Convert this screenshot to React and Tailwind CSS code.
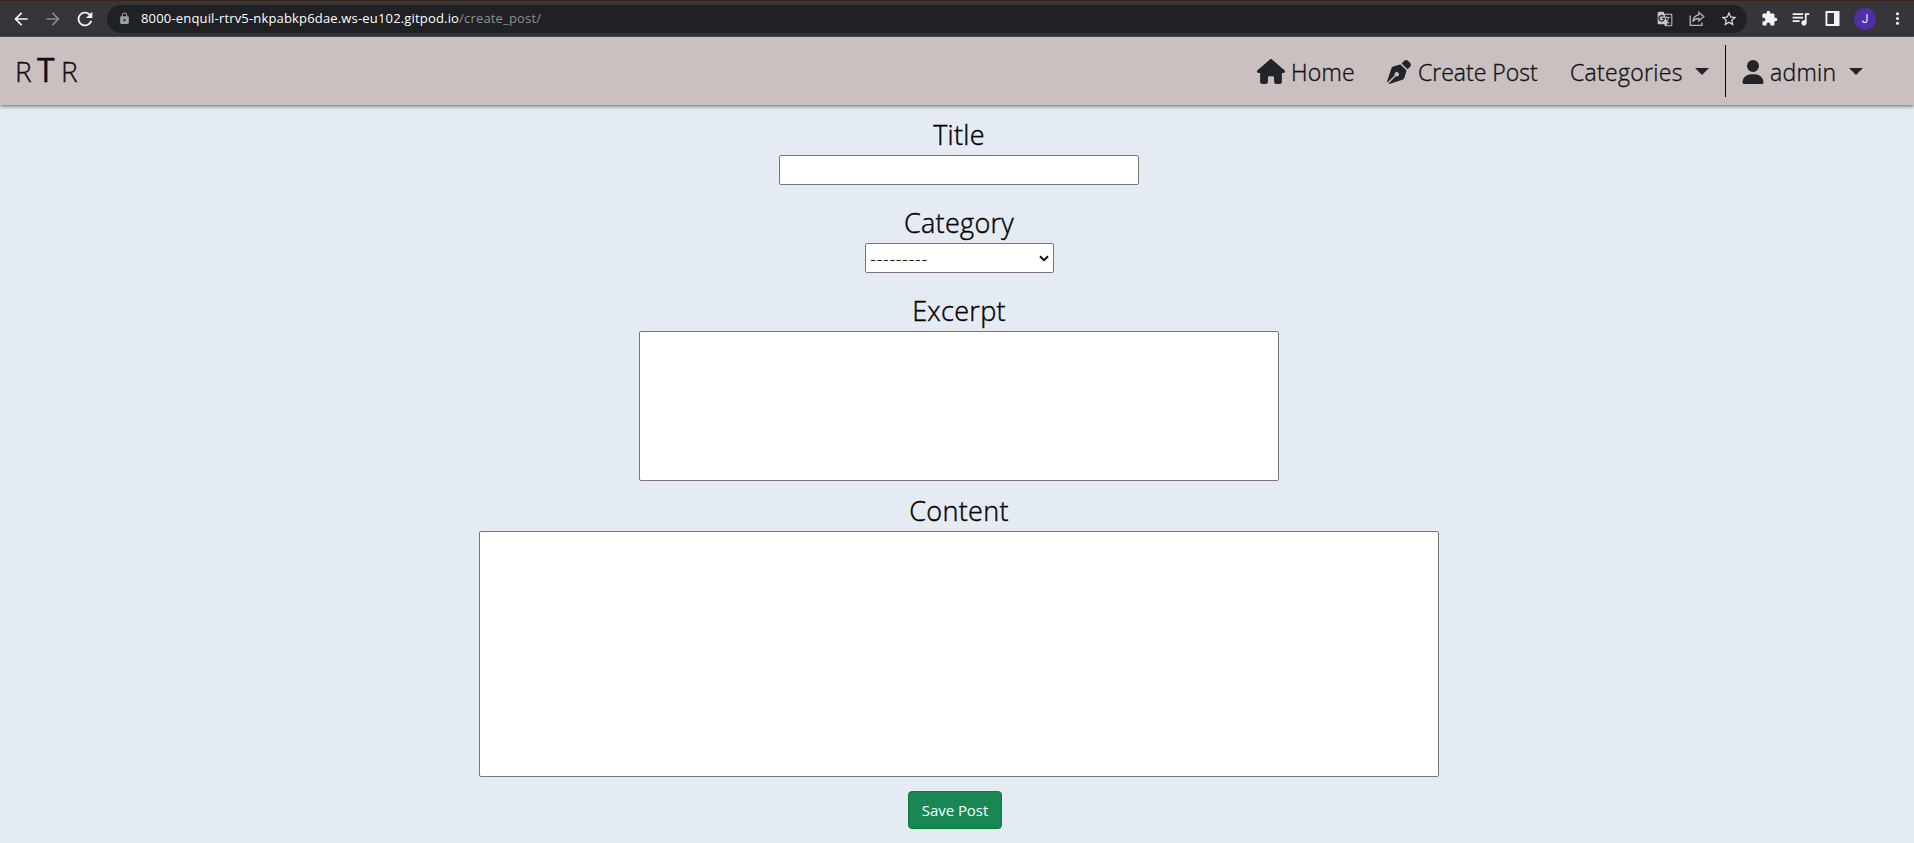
import React from "react";
import { FaHouse, FaPenNib, FaUser } from "react-icons/fa6";
import {
  MdArrowBack,
  MdArrowForward,
  MdRefresh,
  MdLock,
  MdGTranslate,
  MdStarBorder,
  MdExtension,
  MdQueueMusic,
  MdMoreVert,
} from "react-icons/md";

function ShareIcon() {
  return (
    <svg className="h-[16px] w-[16px]" viewBox="0 0 16 16" fill="none" stroke="#b4b6ba" strokeWidth="1.3" strokeLinejoin="miter">
      <path d="M1.2 4.5V14.3H13V11.5" />
      <path d="M9.8 1.4L14.8 5.6L9.8 9.8V7.5C7 7.5 5 8.6 3.8 10.8C4.2 7 6.3 4.3 9.8 3.8Z" />
    </svg>
  );
}

function SidePanelIcon() {
  return (
    <svg className="h-[15px] w-[15px]" viewBox="0 0 15 15">
      <path fillRule="evenodd" fill="#f1f3f4" d="M0.5 0H14.5V15H0.5ZM2.4 2V13H9V2Z" />
    </svg>
  );
}

function Caret() {
  return (
    <svg className="h-[7px] w-[14px]" viewBox="0 0 14 7">
      <path d="M0 0H14L7 7Z" fill="#212529" />
    </svg>
  );
}

function BrowserBar() {
  return (
    <header className="flex h-[37px] items-center border-t border-b border-t-[#3b2219] border-b-[#54565b] bg-[#35363a]">
      <div className="flex w-[107px] shrink-0 items-center pl-[11px]">
        <MdArrowBack className="size-[20px] text-[#f1f3f4]" />
        <MdArrowForward className="ml-[12px] size-[20px] text-[#87898d]" />
        <MdRefresh className="ml-[11px] size-[22px] text-[#f1f3f4]" />
      </div>
      <div className="flex h-[28px] w-[1640px] shrink-0 items-center rounded-full bg-[#202124]">
        <MdLock className="mr-[9px] ml-[11px] size-[13px] text-[#9aa0a6]" />
        <div className="grow pl-px text-[13px] tracking-[0.17px] whitespace-pre text-white">
          8000-enquil-rtrv5-nkpabkp6dae.ws-eu102.gitpod.io<span className="text-[#8b8f94]">/create_post/</span>
        </div>
        <MdGTranslate className="size-[16px] text-[#c4c6ca]" />
        <div className="ml-[16px]">
          <ShareIcon />
        </div>
        <MdStarBorder className="mr-[9px] ml-[15px] size-[18px] text-[#dfe1e5]" />
      </div>
      <MdExtension className="ml-[14px] size-[17px] text-[#f1f3f4]" />
      <MdQueueMusic className="ml-[12px] size-[21px] text-[#f1f3f4]" />
      <div className="ml-[14px]">
        <SidePanelIcon />
      </div>
      <div className="ml-[14px] flex size-[22px] items-center justify-center rounded-full bg-[#512da8] font-['Roboto',sans-serif] text-[12px] text-[#ece7f7]">
        J
      </div>
      <MdMoreVert className="ml-[12px] size-[19px] text-[#f1f3f4]" />
    </header>
  );
}

function Navbar() {
  return (
    <nav className="flex h-[68px] shrink-0 items-center bg-[#cac0c0] text-[23px] font-light text-[#0c1216] shadow-[0_1px_4px_rgba(0,0,0,0.6)] [-webkit-text-stroke:0.35px_#0c1216]">
      <div className="flex w-[1257px] items-baseline pb-px pl-[15px] text-[28px] leading-[40px]">
        <span className="w-[22px]">R</span>
        <span className="w-[24px] text-[32px] font-medium">T</span>
        <span>R</span>
      </div>
      <a className="flex w-[130px] items-center">
        <FaHouse className="mt-px h-[25px] w-[28px] text-[#212529]" />
        <span className="mt-[2px] ml-[6px] tracking-[0.2px]">Home</span>
      </a>
      <a className="flex w-[183px] items-center">
        <FaPenNib className="mt-px size-[24px] text-[#212529]" />
        <span className="mt-[2px] ml-[7px] whitespace-nowrap">Create Post</span>
      </a>
      <a className="flex w-[155px] items-center">
        <span className="mt-[2px] w-[125px] tracking-[0.3px]">Categories</span>
        <Caret />
      </a>
      <div className="h-[52px] w-px bg-black" />
      <a className="flex items-center pl-[16px]">
        <FaUser className="mt-px h-[24px] w-[22px] text-[#212529]" />
        <span className="mt-[2px] ml-[6px] w-[79px] tracking-[0.3px]">admin</span>
        <Caret />
      </a>
    </nav>
  );
}

function Field({ label, className, children }) {
  return (
    <div className={"flex flex-col items-center " + className}>
      <label className="h-[41px] text-[27px] leading-[41px] font-light tracking-[0.3px] text-black [-webkit-text-stroke:0.4px_black]">
        {label}
      </label>
      {children}
    </div>
  );
}

export default function App() {
  return (
    <div className="flex h-[843px] w-full flex-col overflow-hidden bg-[#e4ebf2] font-['Open_Sans','Noto_Sans',sans-serif]">
      <BrowserBar />
      <Navbar />
      <main className="flex flex-col items-center pl-[4px]">
        <Field label="Title" className="mt-[9px]">
          <input type="text" className="h-[30px] w-[360px] rounded-[2px] border border-[#767676] bg-white" />
        </Field>
        <Field label="Category" className="mt-[17px]">
          <div className="flex h-[30px] w-[189px] items-center justify-between rounded-[2px] border border-[#767676] bg-white pr-[4px] pl-[5px] text-[16px] text-black">
            <span className="mt-[2px] font-light tracking-[1.25px] [-webkit-text-stroke:0.3px_black]">---------</span>
            <svg className="h-[7px] w-[10px]" viewBox="0 0 10 7" fill="none" stroke="#111" strokeWidth="2">
              <path d="M1 1.2L5 5.2L9 1.2" />
            </svg>
          </div>
        </Field>
        <Field label="Excerpt" className="mt-[17px]">
          <textarea className="block h-[150px] w-[640px] resize-none rounded-[2px] border border-[#767676] bg-white" />
        </Field>
        <Field label="Content" className="mt-[9px]">
          <textarea className="block h-[246px] w-[960px] resize-none rounded-[2px] border border-[#767676] bg-white" />
        </Field>
        <button className="mt-[14px] mr-[8px] h-[38px] w-[94px] rounded-[4px] border border-[#0a7a38] bg-[#198754] text-[15px] tracking-[-0.05px] whitespace-nowrap text-white">
          Save Post
        </button>
      </main>
    </div>
  );
}
